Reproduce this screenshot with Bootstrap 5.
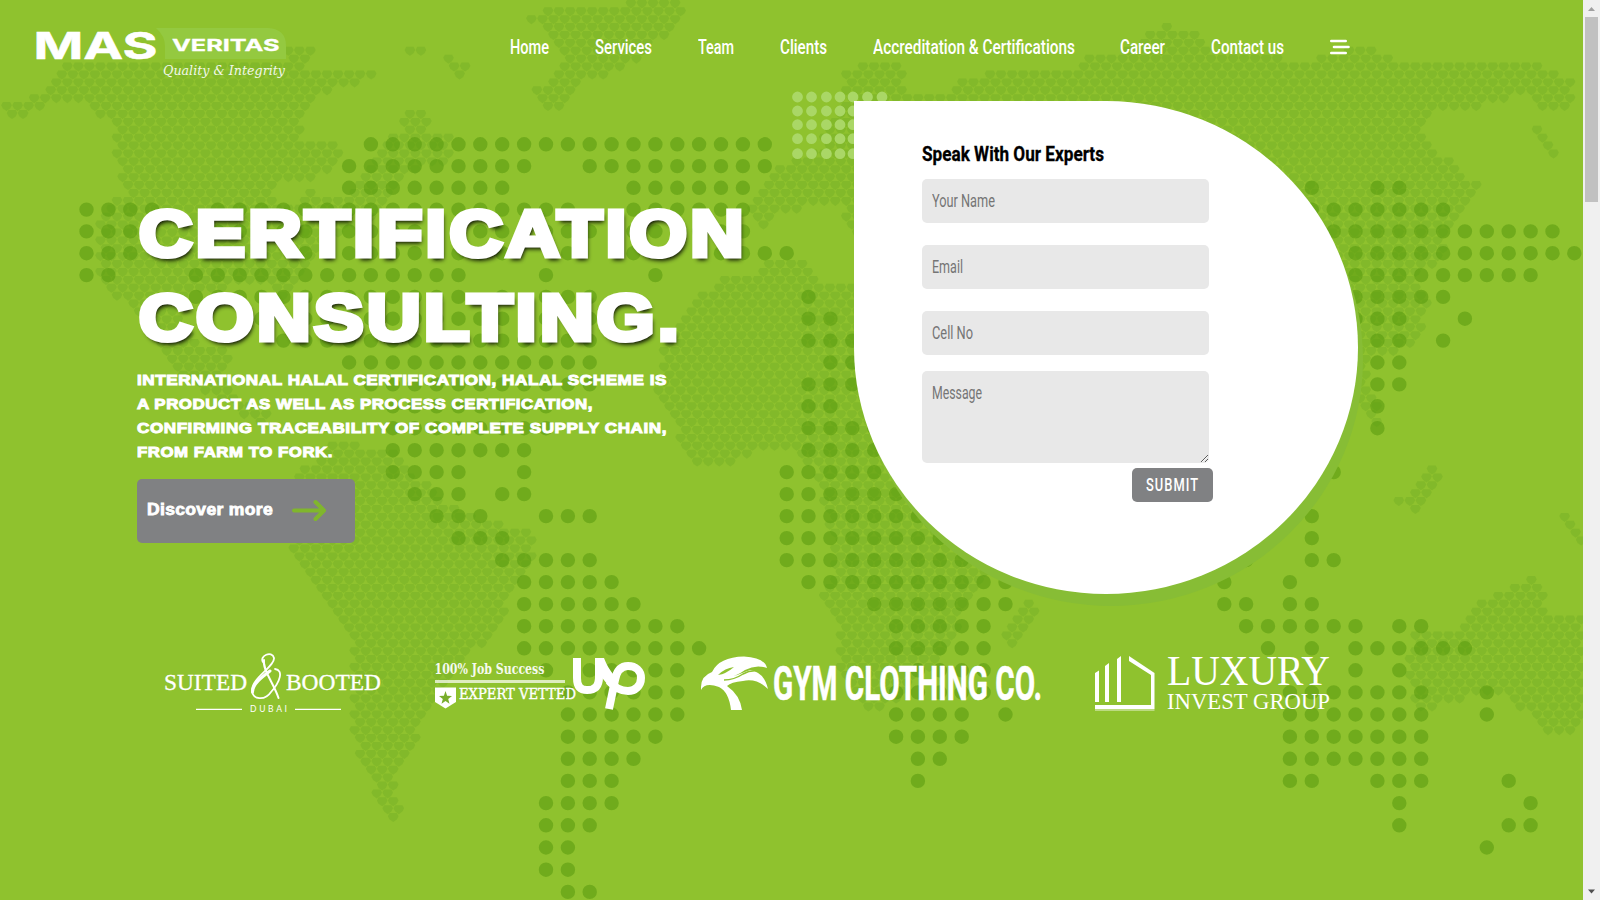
<!DOCTYPE html>
<html lang="en">
<head>
<meta charset="utf-8">
<meta name="viewport" content="width=device-width, initial-scale=1">
<title>MAS Veritas</title>
<link href="https://cdn.jsdelivr.net/npm/bootstrap@5.3.0/dist/css/bootstrap.min.css" rel="stylesheet">
<style>
body{font-family:Roboto,"Liberation Sans",sans-serif;height:900px;overflow:hidden;background:#8fc22e}
.hero{width:1583px;height:900px;background:#8fc22e;overflow:hidden}
.worldmap{left:0;top:0}
.fit{display:inline-block;white-space:nowrap;transform-origin:0 50%}
.topbar{height:94px;padding-left:32px}
.menu{gap:45.9px;margin-left:220px;height:94px}
.menu a{color:#fff;text-decoration:none;font-size:19.5px;font-weight:500;line-height:24px;padding-top:1px}
.copy{padding:98px 0 0 137px;width:855px}
.copy h1{font-family:"Liberation Sans",Arial,sans-serif;font-weight:700;font-size:65px;line-height:84px;margin:0;color:#fff;letter-spacing:3px;-webkit-text-stroke:5px #fff;padding-left:2px}
.copy h1 .fit{text-shadow:2px 4px 4px rgba(0,0,0,.95)}
.copy p{font-family:"Liberation Sans",Arial,sans-serif;font-weight:700;font-size:15.3px;letter-spacing:.5px;line-height:24px;color:#fff;margin:8px 0 15px;-webkit-text-stroke:1px #fff}
.discover{width:218px;height:64px;background:#808183;border-radius:5px;padding:0 0 3px 10px;font:700 16px "Liberation Sans",Arial,sans-serif;letter-spacing:.3px;-webkit-text-stroke:.8px #fff;color:#fff;border:0}
.discover .fit{padding-top:1px}
.dropwrap{width:504px;height:493px;margin-top:7px;margin-left:-1px}
.drop{width:504px;height:493px;background:#fff;border-radius:0 50% 50% 50%;box-shadow:5px 12px 0 #87bd35;padding:39px 0 0 68px}
.specks{left:-63px;top:-10px}
.drop h2{font-size:21px;font-weight:700;color:#000;line-height:28px;margin:0 0 11px;-webkit-text-stroke:.3px #000}
.field{width:287px;height:44px;margin-bottom:22px}
.field .form-control{background:#e8e8e8;border:0;border-radius:5px;width:287px;height:44px}
.field label{left:9.5px;top:9px;font-size:18px;color:#757575;line-height:26px;pointer-events:none}
.field.area,.field.area .form-control{height:92px}
.field.area{margin-bottom:0}
.submit{width:81px;height:34px;background:#808183;border:0;border-radius:5px;color:#fff;font-size:19px;font-weight:500;letter-spacing:1.5px;margin:5px 0 0 210px;line-height:34px}
.clients{left:0;top:640px}
.sbar{width:17px;height:900px;background:#f0f0f0}
.thumb{width:13px;height:185px;background:#c1c1c1}
</style>
</head>
<body class="d-flex">
<main class="hero position-relative flex-shrink-0">
  <svg class="worldmap position-absolute" width="1583" height="900" aria-hidden="true"><path id="hexes" fill="#80b729" opacity=".85"/><path id="dots" fill="#5a9b10" fill-opacity=".58"/></svg>

  <header class="topbar position-relative d-flex">
    <svg width="258" height="94" viewBox="32 0 258 94" fill="#fff" class="flex-shrink-0">
      <path d="M156 28H268Q286 29 286 46V59H165V46Q165 36 156 28Z" fill="#94c940"/>
      <g font-family="Inter,sans-serif" font-weight="700" stroke="#fff">
        <text x="33.500" y="58.500" font-size="37" stroke-width=".5" textLength="124" lengthAdjust="spacingAndGlyphs">MAS</text>
        <text x="172" y="50.500" font-size="16" stroke-width=".3" textLength="107.500" lengthAdjust="spacingAndGlyphs">VERITAS</text>
      </g>
      <text x="163" y="75" font-family="DejaVu Serif,serif" font-style="italic" font-size="13" textLength="122" lengthAdjust="spacingAndGlyphs" opacity=".9">Quality &amp; Integrity</text>
    </svg>
    <nav class="menu d-flex align-items-center">
      <a href="#" class="fit" data-w="39">Home</a>
      <a href="#" class="fit" data-w="57">Services</a>
      <a href="#" class="fit" data-w="36">Team</a>
      <a href="#" class="fit" data-w="47">Clients</a>
      <a href="#" class="fit" data-w="202">Accreditation &amp; Certifications</a>
      <a href="#" class="fit" data-w="45">Career</a>
      <a href="#" class="fit" data-w="73">Contact us</a>
      <svg width="20" height="16" viewBox="0 0 20 16" stroke="#fff" stroke-width="2.600" stroke-linecap="round"><path d="M1.300 2H15.700M4 8H18.500M1.300 14H15.700"/></svg>
    </nav>
  </header>

  <section class="position-relative d-flex">
    <div class="copy flex-shrink-0">
      <h1><span class="fit" data-w="608">CERTIFICATION</span><br><span class="fit" data-w="543">CONSULTING.</span></h1>
      <p><span class="fit" data-w="530">INTERNATIONAL HALAL CERTIFICATION, HALAL SCHEME IS</span><br><span class="fit" data-w="456">A PRODUCT AS WELL AS PROCESS CERTIFICATION,</span><br><span class="fit" data-w="530">CONFIRMING TRACEABILITY OF COMPLETE SUPPLY CHAIN,</span><br><span class="fit" data-w="196">FROM FARM TO FORK.</span></p>
      <button class="discover d-flex align-items-center"><span class="fit" data-w="126">Discover more</span>
        <svg class="ms-3" width="42" height="24" viewBox="289 499 42 24" fill="none" stroke="#80b62d" stroke-width="4" stroke-linecap="round" stroke-linejoin="round"><path d="M294 511.500H323M315.500 503L324 511.500L315.500 520"/></svg>
      </button>
    </div>
    <div class="dropwrap position-relative flex-shrink-0">
      <svg class="specks position-absolute" width="100" height="70"><path id="specks" fill="#aad766"/></svg>
      <form class="drop position-relative">
        <h2><span class="fit" data-w="182">Speak With Our Experts</span></h2>
        <div class="field position-relative"><input id="n" class="form-control"><label for="n" class="position-absolute"><span class="fit" data-w="63">Your Name</span></label></div>
        <div class="field position-relative"><input id="e" class="form-control"><label for="e" class="position-absolute"><span class="fit" data-w="31">Email</span></label></div>
        <div class="field position-relative mb-3"><input id="c" class="form-control"><label for="c" class="position-absolute"><span class="fit" data-w="41">Cell No</span></label></div>
        <div class="field area position-relative"><textarea id="m" class="form-control"></textarea><label for="m" class="position-absolute"><span class="fit" data-w="50">Message</span></label></div>
        <button type="button" class="submit p-0 text-center"><span class="fit" data-w="53">SUBMIT</span></button>
      </form>
    </div>
  </section>

  <section class="clients position-absolute">
    <svg width="1400" height="90" viewBox="0 640 1400 90" fill="#fff">
      <g font-family="Liberation Serif,serif">
        <text x="164" y="690" font-size="24" textLength="83" lengthAdjust="spacingAndGlyphs" stroke="#fff" stroke-width=".3">SUITED</text>
        <text x="286" y="690" font-size="24" textLength="95" lengthAdjust="spacingAndGlyphs" stroke="#fff" stroke-width=".3">BOOTED</text>
        <g fill="none" stroke="#fff" stroke-linecap="round"><path d="M263 662C259 656 272 650 274 658C275 666 252 678 252 690C252 700 265 701 271 692C280 682 284 670 275 669" stroke-width="1.800"/><path d="M264 660C262 669 274 684 278.500 698" stroke-width="2"/><path d="M270 671C262 677 252.500 684 252.500 692" stroke-width="3"/></g>
        <text x="250" y="712" font-family="Lato,sans-serif" font-size="8.500" textLength="37" lengthAdjust="spacing">DUBAI</text>
        <path d="M196 708.700H242V710H196ZM295 708.700H341V710H295Z"/>
      </g>
      <g font-family="DejaVu Serif,serif">
        <text x="434.500" y="673.500" font-size="14" font-weight="bold" textLength="110" lengthAdjust="spacingAndGlyphs" opacity=".92">100% Job Success</text>
        <text x="459" y="698.700" font-size="14.500" textLength="117" lengthAdjust="spacingAndGlyphs" stroke="#fff" stroke-width=".4">EXPERT VETTED</text>
        <path d="M435 680H565V683H435Z" opacity=".7"/>
        <path d="M435 687.500H456V702L445.500 708.500L435 702Z"/>
        <path d="M445.500 691L447.100 695.800L452 696L448.200 699L449.500 703.800L445.500 701L441.500 703.800L442.800 699L439 696L443.900 695.800Z" fill="#79ad2c"/>
      </g>
      <path d="M577 658V678C577 686 580 690 587 690C595 690 599 686 599 677V658M609 709L615 680C617 669 622 666 628 666C636 666 641 671 641 678C641 686 635 691 628 691C620 691 614 687 609 681" fill="none" stroke="#fff" stroke-width="8"/>
      <path d="M595 658H604C607 666 610 670 613 674L616 689L608 685L599 674Z"/>
      <path d="M701 687Q701 676 712 672Q719 657 744 656.500Q765 658 767 668Q756 664 745 670Q737 676 726 678Q739 675 750 670Q764 672 768 689Q757 678 743 681Q731 682 727 686Q740 695 742 710H731Q729 692 719 687Q705 682 701 690Z"/>
      <path d="M718 675Q726 674 734 667Q725 668 718 675" fill="#8fc22e"/><path d="M724 680Q734 680 743 674Q750 670 758 671" fill="none" stroke="#8fc22e" stroke-width="1.500"/>
      <text x="773" y="699.500" font-family="Roboto,sans-serif" font-weight="700" font-size="49" textLength="269" lengthAdjust="spacingAndGlyphs" stroke="#fff" stroke-width=".6">GYM CLOTHING CO.</text>
      <path d="M1095 673L1099 670.500V702H1095ZM1105 666L1109 663V702H1105ZM1117 659L1121 656V702H1117ZM1129 656L1154.500 673V709H1095V705H1151V675L1129 661Z"/><path d="M1095 709H1154.500V711H1095Z" opacity=".4"/>
      <g font-family="Liberation Serif,serif">
        <text x="1167" y="684.500" font-size="43" textLength="163" lengthAdjust="spacingAndGlyphs">LUXURY</text>
        <text x="1167" y="709" font-size="23.500" textLength="163" lengthAdjust="spacingAndGlyphs">INVEST GROUP</text>
      </g>
    </svg>
  </section>
</main>
<aside class="sbar d-flex flex-column align-items-center justify-content-between flex-shrink-0">
  <div class="d-flex flex-column align-items-center"><svg width="17" height="17"><path d="M5 11L8.500 7L12 11Z" fill="#a0a0a0"/></svg><div class="thumb"></div></div>
  <svg width="17" height="17"><path d="M5 6.500L8.500 10.500L12 6.500Z" fill="#505050"/></svg>
</aside>
<script src="https://cdn.jsdelivr.net/npm/bootstrap@5.3.0/dist/js/bootstrap.bundle.min.js"></script>
<script>
// Condense or widen a text run to its design width
document.querySelectorAll('.fit').forEach(function(el){
  var n=el.getBoundingClientRect().width,w=+el.dataset.w;
  el.style.transform='scaleX('+w/n+')';el.style.marginRight=(w-n)+'px';
});
function disc(x,y,r){return 'M'+(x-r).toFixed(1)+' '+y.toFixed(1)+'a'+r+' '+r+' 0 1 0 '+2*r+' 0a'+r+' '+r+' 0 1 0 '+(-2*r)+' 0'}
// Coarse world map: filled column ranges for each row
var rows=['13-31','12-20,23-31','12-19,25-30,56,59,60','0-3,6-22,25-30,56-62','0-2,6-23,25-30,57-67','0-2,10-19,22,25,29-32,58-68','0,1,5-17,21,26,58-66','5-17,19,21-23,33,58-62','8-19,21-23,33,34,58-60,63','9-23,33-35,59,60,62','12-23,34,35,59,60','13-23,33-35,59,60','14-21,33,34,59','14-21,33-36,59','14-20,33-37','14-17,20,32-39,57','15-17,19,20,32-39','16-18,21-23,32-39,56','17-19,32-40,56','19-23,32-41,53,56,57','20-24,33-42,52,55','20-25,36-42,52,53,55,56','20-27,37-41,53-58,60,61','20-28,37-41,54,56,58-63','21,23-27,38-41,58,60','22-27,37-41,55-61,64','22-27,37-40,42,55-61,64','22-26,37-40,55-61','22-25,38,39,55-61','22-24,38,55,56,59-61,65','21-24,60,66','21-23,60,65,66','21,22,64','21,22','22,23'];
var d='';
rows.forEach(function(s,r){s.split(',').forEach(function(t){var a=t.split('-').map(Number),b=a.length>1?a[1]:a[0];for(var c=a[0];c<=b;c++)d+=disc(86.5+21.88*c,144.3+21.75*r+.007*r*r,7.2)})});
document.getElementById('dots').setAttribute('d',d);
// Fine world map: small cells inside each landmass outline
var land=[
'0,117 8,103 30,103 45,85 55,70 70,62 240,62 290,62 312,70 375,72 340,88 315,98 300,120 305,140 335,143 345,165 325,172 315,185 300,180 280,182 272,195 285,210 310,190 330,197 345,200 365,175 375,162 385,145 400,130 405,112 425,112 430,130 445,130 455,150 450,165 420,168 400,175 395,195 375,215 330,240 310,265 300,285 280,300 265,285 200,290 180,310 195,340 215,350 235,345 225,370 240,400 280,420 255,425 220,400 175,375 150,340 120,300 100,285 95,260 95,225 110,200 130,190 118,170 115,125 95,115 82,100 50,102 22,118',
'285,48 312,48 305,62 288,62','355,72 376,70 370,82 340,85','404,50 426,50 424,56 406,56','443,56 455,58 470,66 460,82 450,72',
'290,500 300,470 340,440 400,455 420,480 450,505 500,525 535,535 530,565 510,590 505,620 485,645 470,650 455,680 430,710 415,740 400,770 395,790 402,810 392,825 375,790 355,745 350,700 350,640 320,590 290,555',
'630,0 685,0 688,14 665,35 640,60 600,78 575,85 555,112 538,110 533,92 548,80 560,60 550,40 540,27 528,20 545,10 620,10',
'660,350 690,310 715,280 750,275 770,260 800,260 830,285 860,280 1000,280 1040,450 1020,540 975,590 960,620 945,660 915,675 900,700 875,715 855,705 840,670 840,630 820,605 835,570 830,530 815,470 790,450 745,455 735,463 695,463 675,430 657,400',
'1033,597 1042,597 1035,615 1025,640 1012,655 1005,640 1015,610',
'750,215 755,195 775,170 800,160 820,145 840,105 830,95 842,85 845,72 860,62 895,64 908,85 905,98 945,97 958,80 985,80 990,72 1070,70 1090,55 1135,50 1145,32 1163,35 1165,24 1175,34 1200,35 1215,52 1310,62 1355,47 1370,50 1400,62 1525,62 1550,70 1572,82 1570,100 1560,112 1535,108 1520,92 1490,105 1440,110 1425,130 1430,150 1460,165 1480,190 1465,215 1450,225 1440,265 1415,270 1430,310 1415,345 1385,355 1365,360 1370,390 1385,420 1375,432 1350,400 1330,350 1000,340 850,230 840,205 815,202 800,215 780,208 760,235',
'1527,127 1538,127 1557,155 1548,160',
'1408,650 1413,633 1455,630 1465,612 1486,597 1528,577 1541,580 1549,612 1565,618 1583,615 1583,722 1572,738 1543,738 1528,715 1507,697 1465,698 1439,707 1418,713 1410,683',
'1398,500 1430,467 1442,475 1436,490 1425,510 1400,508','1553,515 1570,513 1580,530 1583,548 1575,545'
].map(function(p){return p.split(' ').map(function(q){return q.split(',').map(Number)})});
function inside(x,y,p){var k=false;for(var i=0,j=p.length-1;i<p.length;j=i++){var a=p[i],b=p[j];if((a[1]>y)!==(b[1]>y)&&x<(b[0]-a[0])*(y-a[1])/(b[1]-a[1])+a[0])k=!k}return k}
var h='';
for(var r=0;r<112;r++)for(var c=0;c<145;c++){
  var x=1+11.05*c+(r%2?5.5:0),y=3.5+7.9*r;
  if(land.some(function(p){return inside(x,y,p)}))h+='M'+(x-5.3).toFixed(1)+' '+(y-1).toFixed(1)+'l1.700-3.100h7.200l1.700 3.100l-1.700 3.300l-3.600 2.600l-3.600-2.600z';
}
document.getElementById('hexes').setAttribute('d',h);
var s='';[797.5,811.5,826.4,840,853,867.5,882].forEach(function(x){[97,111,124.7,138.7,153.7].forEach(function(y){s+=disc(x-791,y-91,5.4)})});
document.getElementById('specks').setAttribute('d',s);
</script>
</body>
</html>
